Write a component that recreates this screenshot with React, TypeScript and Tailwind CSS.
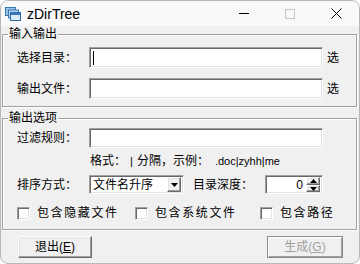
import * as React from "react";

const sunken =
  "border border-t-[#a0a0a0] border-l-[#a0a0a0] border-r-white border-b-white shadow-[inset_1px_1px_0_#696969,inset_-1px_-1px_0_#e3e3e3] bg-white";
const raised =
  "border border-t-white border-l-white border-r-[#696969] border-b-[#696969] shadow-[inset_-1px_-1px_0_#a0a0a0,inset_1px_1px_0_#e3e3e3] bg-[#f0f0f0]";
const group =
  "border border-[#a0a0a0] shadow-[inset_1px_1px_0_#fff,1px_1px_0_#fff]";

function AppIcon() {
  return (
    <svg width="16" height="14" viewBox="0 0 16 14">
      <rect x="0.5" y="0.5" width="10" height="8" fill="#9cc3e6" stroke="#3b78b8" />
      <rect x="3.5" y="3" width="10" height="8" fill="#b9d5ef" stroke="#3b78b8" />
      <rect x="5.5" y="5.5" width="10" height="8" fill="#dbe9f6" stroke="#2f6aa8" />
      <rect x="6" y="6" width="9" height="2" fill="#3b78b8" />
    </svg>
  );
}

function Field({ label, cursor }: { label: string; cursor?: boolean }) {
  return (
    <div className="flex h-[21px] items-center">
      <span className="w-[72px]">{label}</span>
      <div className={`${sunken} flex h-[21px] w-[234px] items-center pl-[3px]`}>
        {cursor && <span className="h-[14px] w-px bg-black" />}
      </div>
      <span className="ml-[4px]">选</span>
    </div>
  );
}

function Check({ label, width }: { label: string; width?: string }) {
  return (
    <div className={`flex items-center ${width ?? ""}`}>
      <span className={`${sunken} h-[13px] w-[13px]`} />
      <span className="ml-[7px] tracking-[1.6px]">{label}</span>
    </div>
  );
}

export default function App() {
  return (
    <div className="flex h-[264px] w-[360px] flex-col overflow-hidden rounded-[8px] border border-[#b8b8b8] bg-[#f0f0f0] font-['Liberation_Sans','Noto_Sans_CJK_SC',sans-serif] text-[12px] leading-[14px] text-black">
      {/* title bar */}
      <div className="flex h-[25px] items-center bg-[#f9f9f9]">
        <div className="ml-[4px] flex items-center">
          <AppIcon />
        </div>
        <span className="ml-[6px] text-[14px] leading-[18px]">zDirTree</span>
        <div className="ml-auto flex h-full">
          <div className="flex w-[46px] items-center justify-center">
            <span className="h-px w-[10px] bg-black" />
          </div>
          <div className="flex w-[46px] items-center justify-center">
            <span className="h-[10px] w-[10px] border border-[#c4c4c4]" />
          </div>
          <div className="flex w-[46px] items-center justify-center">
            <svg width="11" height="11" viewBox="0 0 11 11">
              <path d="M0.5 0.5L10.5 10.5M10.5 0.5L0.5 10.5" stroke="#000" strokeWidth="1" />
            </svg>
          </div>
        </div>
      </div>

      <div className="flex flex-1 flex-col pt-[1px] pl-[1px] pr-[2px]">
        <fieldset className={`${group} pb-[7px]`}>
          <legend className="ml-[5px] bg-[#f0f0f0] px-[1px]">输入输出</legend>
          <div className="mt-[6px] flex flex-col gap-[10px] pl-[14px]">
            <Field label="选择目录：" cursor />
            <Field label="输出文件：" />
          </div>
        </fieldset>

        <fieldset className={`${group} mt-[4px] pb-[9px]`}>
          <legend className="ml-[5px] bg-[#f0f0f0] px-[1px]">输出选项</legend>
          <div className="flex flex-col pl-[14px]">
            <div className="mt-[3px] flex h-[20px] items-center">
              <span className="w-[72px]">过滤规则：</span>
              <div className={`${sunken} h-[20px] w-[234px]`} />
            </div>
            <div className="mt-[6px] flex h-[14px] items-center pl-[73px]">
              <span>格式：</span>
              <span className="px-[4px] font-['Liberation_Sans',sans-serif] text-[11px]">|</span>
              <span>分隔，示例：</span>
              <span className="ml-[6px] font-['Liberation_Sans',sans-serif] text-[11px]">.doc|zyhh|me</span>
            </div>
            <div className="mt-[7px] flex h-[19px] items-center">
              <span className="w-[72px]">排序方式：</span>
              <div className={`${sunken} flex h-[19px] w-[95px] items-center p-[2px]`}>
                <span className="flex-1 pl-[1px]">文件名升序</span>
                <span className={`${raised} flex h-[15px] w-[14px] items-center justify-center`}>
                  <svg width="7" height="4" viewBox="0 0 7 4">
                    <path d="M0 0H7L3.5 4Z" fill="#000" />
                  </svg>
                </span>
              </div>
              <span className="ml-[9px] w-[72px]">目录深度：</span>
              <div className={`${sunken} flex h-[19px] w-[58px] items-center p-[2px]`}>
                <span className="flex-1 pr-[3px] text-right font-['Liberation_Sans',sans-serif] text-[12px]">0</span>
                <div className="flex h-[15px] w-[14px] flex-col">
                  <span className={`${raised} flex h-[8px] items-center justify-center`}>
                    <svg width="7" height="4" viewBox="0 0 7 4">
                      <path d="M0 4H7L3.5 0Z" fill="#000" />
                    </svg>
                  </span>
                  <span className={`${raised} flex h-[7px] items-center justify-center`}>
                    <svg width="7" height="4" viewBox="0 0 7 4">
                      <path d="M0 0H7L3.5 4Z" fill="#000" />
                    </svg>
                  </span>
                </div>
              </div>
            </div>
            <div className="mt-[12px] flex h-[14px] items-center">
              <Check label="包含隐藏文件" width="w-[118px]" />
              <Check label="包含系统文件" width="w-[125px]" />
              <Check label="包含路径" />
            </div>
          </div>
        </fieldset>

        <div className="mt-[6px] flex pl-[16px] pr-[14px]">
          <button className={`${raised} flex h-[22px] w-[74px] items-center justify-center`}>
            退出(<span className="underline">E</span>)
          </button>
          <button
            disabled
            className="ml-auto flex h-[22px] w-[76px] items-center justify-center border border-[#8a8a8a] bg-[#f0f0f0] text-[#a0a0a0] shadow-[inset_1px_1px_0_#fff,inset_-1px_-1px_0_#a0a0a0]"
          >
            生成(<span className="underline">G</span>)
          </button>
        </div>
      </div>
    </div>
  );
}
